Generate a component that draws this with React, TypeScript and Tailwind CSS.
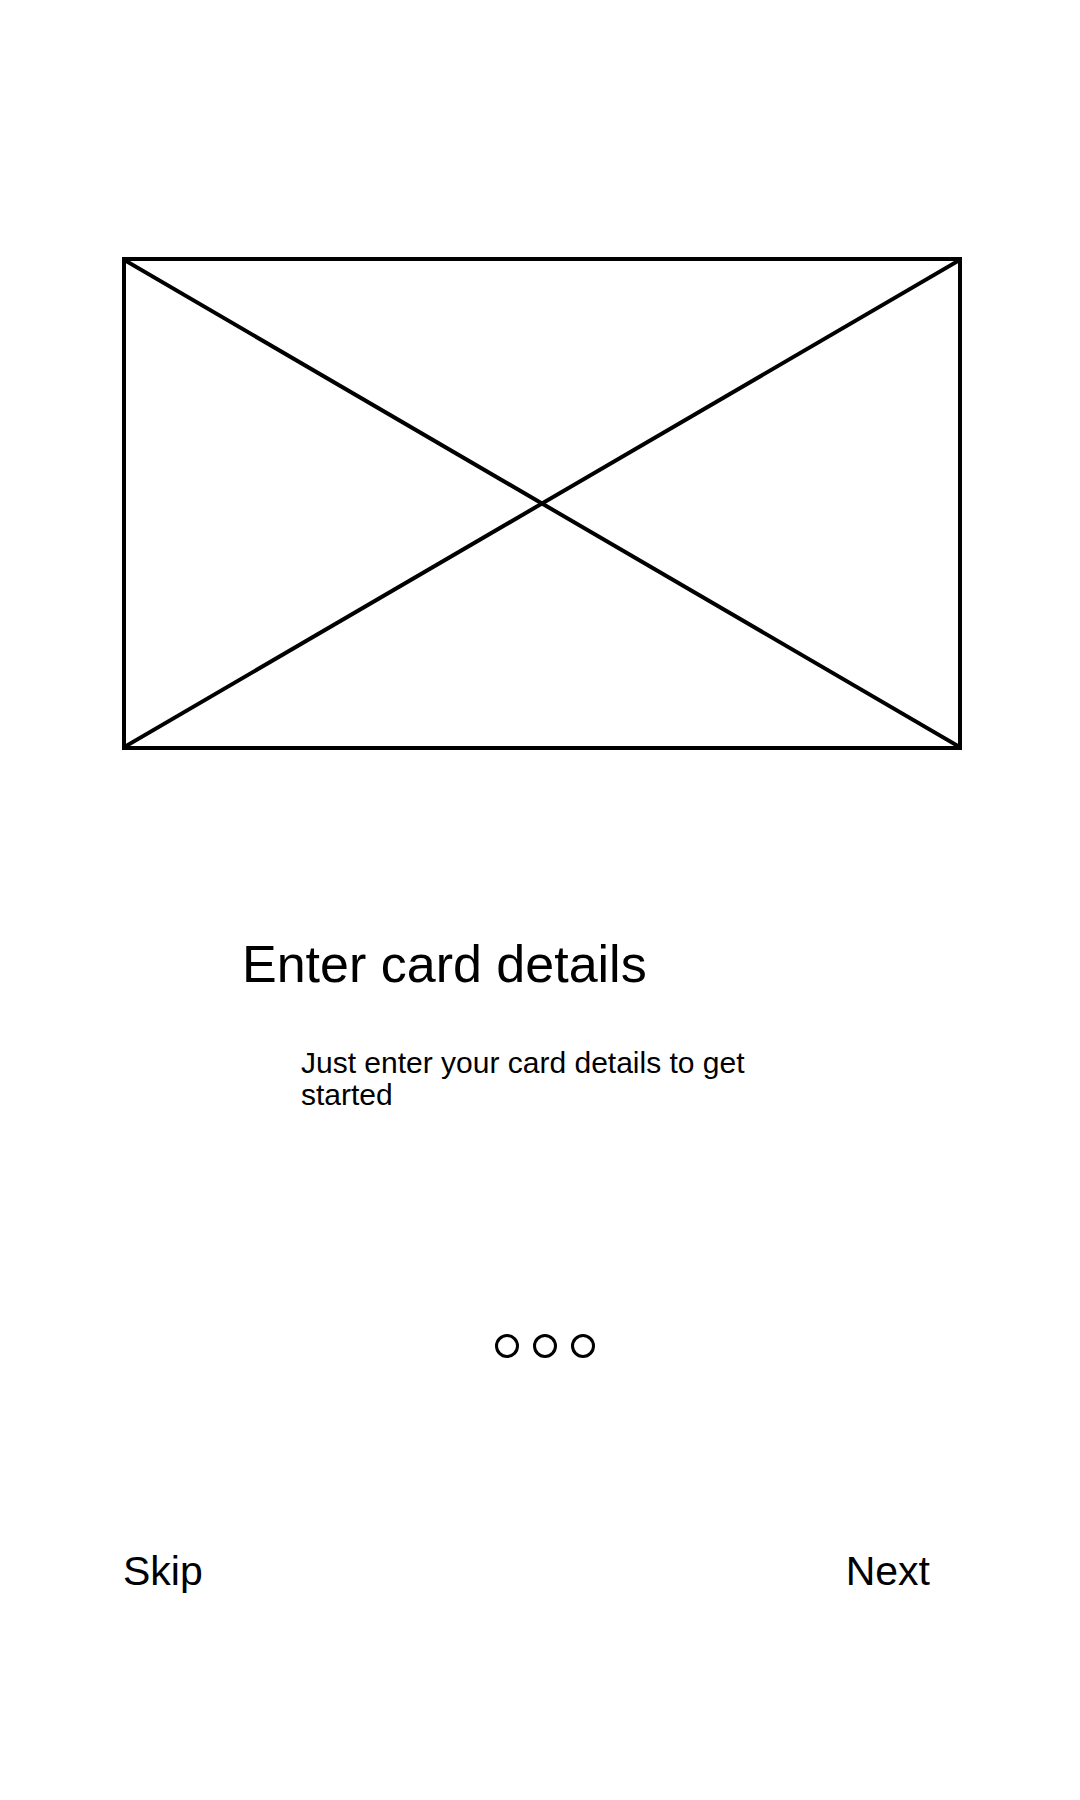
import React from "react";

const font = { fontFamily: '"Liberation Sans", Arial, sans-serif' };

const Placeholder = () => (
  <div className="relative ml-[122px] h-[493px] w-[840px] border-4 border-black">
    <svg
      className="absolute inset-0 h-full w-full"
      viewBox="0 0 832 485"
      preserveAspectRatio="none"
    >
      <line x1="0" y1="0" x2="832" y2="485" stroke="black" strokeWidth="4" />
      <line x1="832" y1="0" x2="0" y2="485" stroke="black" strokeWidth="4" />
    </svg>
  </div>
);

const Dots = () => (
  <div className="ml-[495px] mt-[223px] flex gap-[14px]">
    {[0, 1, 2].map((i) => (
      <span
        key={i}
        className="block h-[24px] w-[24px] rounded-full border-[3px] border-black"
      />
    ))}
  </div>
);

export default function App() {
  return (
    <div
      className="flex h-[1800px] w-[1080px] flex-col bg-white pt-[257px] text-black"
      style={font}
    >
      <Placeholder />

      <h1 className="mt-[184px] pl-[242px] text-[52px] font-normal leading-[60px]">
        Enter card details
      </h1>

      <p className="mt-[53px] w-[760px] pl-[301px] text-[30px] leading-[32px]">
        Just enter your card details to get started
      </p>

      <Dots />

      <div className="mt-[189px] flex items-center justify-between pl-[123px] pr-[150px] text-[41px] leading-[48px]">
        <button className="cursor-pointer">Skip</button>
        <button className="cursor-pointer">Next</button>
      </div>
    </div>
  );
}
